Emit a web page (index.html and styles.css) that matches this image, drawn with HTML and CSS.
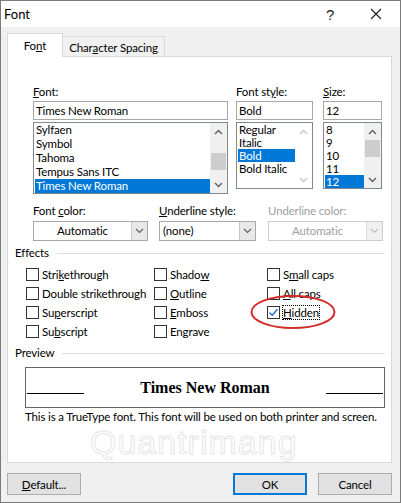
FILE: index.html
```html
<!DOCTYPE html>
<html>
<head>
<meta charset="utf-8">
<link rel="stylesheet" href="styles.css">
</head>
<body>
<div class="window">
  <div class="titlebar">
    <span class="title">Font</span>
    <span class="help">?</span>
    <span class="close"><svg width="12" height="12" viewBox="0 0 12 12"><path d="M1 1 L11 11 M11 1 L1 11" stroke="#1a1a1a" stroke-width="1.1" fill="none"/></svg></span>
  </div>
  <div class="tabs">
    <div class="tab active">Fo<u>n</u>t</div>
    <div class="tab">Char<u>a</u>cter Spacing</div>
  </div>
  <div class="panel">
    <div class="fontrow">
      <div class="col">
        <div class="lbl"><u>F</u>ont:</div>
        <div class="input">Times New Roman</div>
        <div class="list font-list">
          <div class="items rows14">
            <div class="item">Sylfaen</div>
            <div class="item">Symbol</div>
            <div class="item">Tahoma</div>
            <div class="item">Tempus Sans ITC</div>
            <div class="item sel">Times New Roman</div>
          </div>
          <div class="scrollbar">
            <span class="arrow"><svg width="9" height="6" viewBox="0 0 9 6"><path d="M1 5 L4.5 1.5 L8 5" stroke="#606060" stroke-width="1.4" fill="none"/></svg></span>
            <div class="track"><div class="thumb" style="margin-top:13px"></div></div>
            <span class="arrow"><svg width="9" height="6" viewBox="0 0 9 6"><path d="M1 1 L4.5 4.5 L8 1" stroke="#606060" stroke-width="1.4" fill="none"/></svg></span>
          </div>
        </div>
      </div>
      <div class="col">
        <div class="lbl">Font st<u>y</u>le:</div>
        <div class="input">Bold</div>
        <div class="list short-list">
          <div class="items rows13">
            <div class="item">Regular</div>
            <div class="item">Italic</div>
            <div class="item sel">Bold</div>
            <div class="item">Bold Italic</div>
          </div>
          <div class="scrollbar disabled">
            <span class="arrow"><svg width="9" height="6" viewBox="0 0 9 6"><path d="M1 5 L4.5 1.5 L8 5" stroke="#c8c8c8" stroke-width="1.4" fill="none"/></svg></span>
            <div class="track"></div>
            <span class="arrow"><svg width="9" height="6" viewBox="0 0 9 6"><path d="M1 1 L4.5 4.5 L8 1" stroke="#c8c8c8" stroke-width="1.4" fill="none"/></svg></span>
          </div>
        </div>
      </div>
      <div class="col">
        <div class="lbl"><u>S</u>ize:</div>
        <div class="input">12</div>
        <div class="list short-list">
          <div class="items rows13">
            <div class="item">8</div>
            <div class="item">9</div>
            <div class="item">10</div>
            <div class="item">11</div>
            <div class="item sel">12</div>
          </div>
          <div class="scrollbar">
            <span class="arrow"><svg width="9" height="6" viewBox="0 0 9 6"><path d="M1 5 L4.5 1.5 L8 5" stroke="#606060" stroke-width="1.4" fill="none"/></svg></span>
            <div class="track"><div class="thumb" style="margin-top:0px"></div></div>
            <span class="arrow"><svg width="9" height="6" viewBox="0 0 9 6"><path d="M1 1 L4.5 4.5 L8 1" stroke="#606060" stroke-width="1.4" fill="none"/></svg></span>
          </div>
        </div>
      </div>
    </div>

    <div class="comborow">
      <div class="col">
        <div class="lbl">Font <u>c</u>olor:</div>
        <div class="combo center"><span class="val">Automatic</span><span class="drop"><svg width="9" height="6" viewBox="0 0 9 6"><path d="M1 1 L4.5 4.5 L8 1" stroke="#606060" stroke-width="1.2" fill="none"/></svg></span></div>
      </div>
      <div class="col">
        <div class="lbl"><u>U</u>nderline style:</div>
        <div class="combo"><span class="val">(none)</span><span class="drop"><svg width="9" height="6" viewBox="0 0 9 6"><path d="M1 1 L4.5 4.5 L8 1" stroke="#606060" stroke-width="1.2" fill="none"/></svg></span></div>
      </div>
      <div class="col">
        <div class="lbl dis">Underline color:</div>
        <div class="combo center disabled"><span class="val">Automatic</span><span class="drop"><svg width="9" height="6" viewBox="0 0 9 6"><path d="M1 1 L4.5 4.5 L8 1" stroke="#c0c0c0" stroke-width="1.2" fill="none"/></svg></span></div>
      </div>
    </div>

    <div class="group">Effects</div>
    <div class="checks">
      <div class="chk"><span class="box"></span><span>Stri<u>k</u>ethrough</span></div>
      <div class="chk"><span class="box"></span><span>Shado<u>w</u></span></div>
      <div class="chk"><span class="box"></span><span>S<u>m</u>all caps</span></div>
      <div class="chk"><span class="box"></span><span>Double strikethrough</span></div>
      <div class="chk"><span class="box"></span><span><u>O</u>utline</span></div>
      <div class="chk"><span class="box"></span><span><u>A</u>ll caps</span></div>
      <div class="chk"><span class="box"></span><span>Su<u>p</u>erscript</span></div>
      <div class="chk"><span class="box"></span><span><u>E</u>mboss</span></div>
      <div class="chk"><span class="box checked"><svg width="11" height="11" viewBox="0 0 11 11"><path d="M1.5 5.5 L4.2 8.2 L9.5 2.2" stroke="#1668c4" stroke-width="1.3" fill="none"/></svg></span><span class="focus"><u>H</u>idden</span></div>
      <div class="chk"><span class="box"></span><span>Su<u>b</u>script</span></div>
      <div class="chk"><span class="box"></span><span>En<u>g</u>rave</span></div>
      <div class="chk"></div>
      <svg class="circle" width="88" height="36" viewBox="0 0 88 36"><ellipse cx="44" cy="18" rx="41.5" ry="16" stroke="#d42a2a" stroke-width="2" fill="none"/></svg>
    </div>

    <div class="group">Preview</div>
    <div class="preview">
      <span class="pline"></span>
      <span class="ptext">Times New Roman</span>
      <span class="pline"></span>
    </div>
    <div class="info">This is a TrueType font. This font will be used on both printer and screen.</div>
    <div class="watermark">Quantrimang</div>
  </div>
  <div class="buttons">
    <div class="btn"><u>D</u>efault...</div>
    <div class="right">
      <div class="btn primary">OK</div>
      <div class="btn">Cancel</div>
    </div>
  </div>
</div>
</body>
</html>
```
FILE: styles.css
```css
* { box-sizing: border-box; }
html, body { margin: 0; padding: 0; }
body {
  font-family: "Lato", "Liberation Sans", sans-serif;
  font-size: 11.5px;
  letter-spacing: -0.15px;
  color: #000;
  background: #fff;
}
u { text-decoration: underline; text-underline-offset: 1px; }

.window {
  width: 401px;
  height: 503px;
  border: 1px solid #7a7a7a;
  background: #f0f0f0;
  display: flex;
  flex-direction: column;
}

.titlebar {
  height: 26px;
  background: #fff;
  display: flex;
  align-items: center;
  padding-left: 3px;
}
.title { font-size: 13px; letter-spacing: 0; flex: 1; }
.help { width: 16px; text-align: center; font-size: 15px; color: #222; margin-right: 31px; font-family: "Liberation Sans", sans-serif; }
.close { width: 14px; display: flex; align-items: center; justify-content: center; margin-right: 17px; }

.tabs {
  display: flex;
  align-items: flex-end;
  padding-left: 6px;
  margin-top: 6px;
  height: 23px;
  position: relative;
  z-index: 1;
}
.tab {
  height: 20px;
  width: 102px;
  border: 1px solid #d9d9d9;
  border-left: none;
  border-bottom: none;
  display: flex;
  align-items: center;
  justify-content: center;
  background: #f0f0f0;
  padding-top: 1px;
}
.tab.active {
  width: 56px;
  height: 24px;
  background: #fff;
  border-left: 1px solid #d9d9d9;
  margin-bottom: -1px;
  padding-top: 0;
}

.panel {
  margin: 0 8px 0 6px;
  height: 407px;
  background: #fff;
  border: 1px solid #d9d9d9;
  padding: 28px 6px 0 7px;
  position: relative;
  overflow: hidden;
}

.fontrow {
  display: grid;
  grid-template-columns: 195px 77px 61px;
  column-gap: 8px;
  margin-left: 18px;
}
.fontrow .col:nth-child(3) { margin-left: 2px; }
.col { display: flex; flex-direction: column; }
.lbl { height: 14px; line-height: 14px; }
.lbl.dis { color: #a0a0a0; }

.input {
  margin-top: 2px;
  height: 19px;
  border: 1px solid #a8a8a8;
  line-height: 17px;
  padding-left: 2px;
}

.list {
  margin-top: 2px;
  border: 1px solid #828790;
  display: flex;
  padding: 0 0 0 1px;
}
.font-list { height: 72px; }
.short-list { height: 67px; }
.items { flex: 1; display: flex; flex-direction: column; }
.item { padding-left: 1px; white-space: nowrap; }
.rows14 .item { height: 14px; line-height: 14px; }
.rows13 .item { height: 13px; line-height: 13px; }
.item.sel { background: #0078d7; color: #fff; }

.scrollbar {
  width: 17px;
  background: #f0f0f0;
  display: flex;
  flex-direction: column;
}
.scrollbar.disabled { background: #fff; }
.arrow { height: 17px; display: flex; align-items: center; justify-content: center; }
.track { flex: 1; padding: 0 1px; }
.thumb { height: 17px; background: #cdcdcd; }

.comborow {
  display: grid;
  grid-template-columns: 115px 97px 116px;
  column-gap: 11px;
  margin-left: 18px;
  margin-top: 10px;
}
.comborow .col:nth-child(3) { margin-left: 1px; }
.combo {
  margin-top: 3px;
  height: 20px;
  border: 1px solid #a8a8a8;
  display: flex;
  background: #fff;
}
.combo .val { flex: 1; line-height: 18px; padding-left: 3px; }
.combo.center .val { text-align: center; padding-left: 0; }
.combo .drop {
  width: 16px;
  background: #e8e8e8;
  border-left: 1px solid #c8c8c8;
  display: flex;
  align-items: center;
  justify-content: center;
}
.combo.disabled { border-color: #cccccc; }
.combo.disabled .val { color: #a0a0a0; }
.combo.disabled .drop { background: #f0f0f0; border-left-color: #dcdcdc; }

.group {
  margin-top: 5px;
  height: 14px;
  line-height: 14px;
  display: flex;
  align-items: center;
  gap: 8px;
}
.group::after {
  content: "";
  flex: 1;
  height: 1px;
  background: #dcdcdc;
}

.checks {
  position: relative;
  margin-top: 5px;
  margin-left: 11px;
  display: grid;
  grid-template-columns: 128px 113px 1fr;
  grid-auto-rows: 19px;
}
.chk { display: flex; align-items: center; gap: 3px; white-space: nowrap; }
.box {
  width: 13px;
  height: 13px;
  border: 1px solid #333;
  background: #fff;
  display: flex;
  align-items: center;
  justify-content: center;
  flex: none;
}
.focus { outline: 1px dotted #000; outline-offset: 0; line-height: 13px; }
.circle { position: absolute; left: 223px; top: 29px; }

.group + .preview { margin-top: 7px; }
.preview {
  margin-left: 10px;
  height: 41px;
  border: 1px solid #646464;
  display: flex;
  align-items: center;
  padding: 0 1px;
}
.pline { width: 57px; height: 1.5px; background: #000; margin-top: 12px; }
.ptext {
  flex: 1;
  text-align: center;
  font-family: "Liberation Serif", serif;
  font-weight: bold;
  font-size: 16px;
  letter-spacing: 0;
}
.info { margin-left: 10px; margin-top: 2px; height: 14px; line-height: 14px; white-space: nowrap; }

.watermark {
  position: absolute;
  left: 82px;
  top: 368px;
  font-size: 34px;
  line-height: 34px;
  color: transparent;
  -webkit-text-stroke: 1px #e6e6e6;
  letter-spacing: 1px;
  font-family: "Liberation Sans", sans-serif;
}

.buttons {
  display: flex;
  justify-content: space-between;
  margin: 10px 8px 0 6px;
}
.right { display: flex; gap: 11px; }
.btn {
  width: 74px;
  height: 22px;
  background: #e1e1e1;
  border: 1px solid #adadad;
  display: flex;
  align-items: center;
  justify-content: center;
}
.btn.primary { border: 2px solid #0078d7; }
```
